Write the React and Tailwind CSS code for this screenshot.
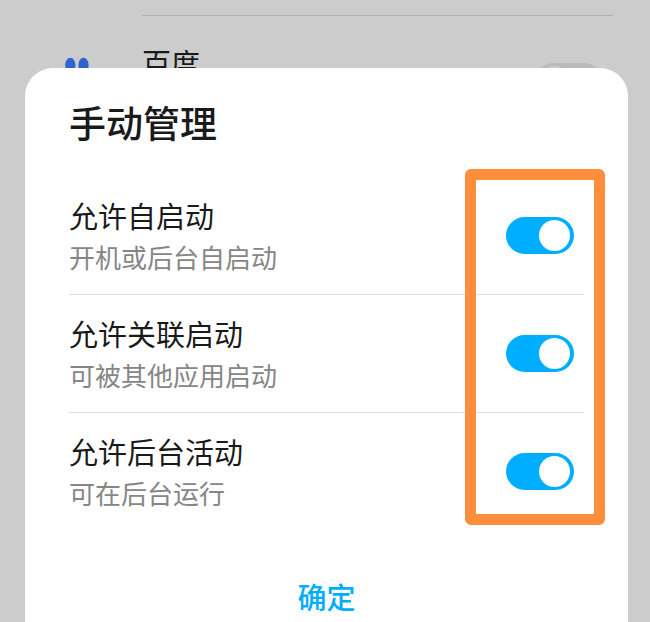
import { useState } from "react";

const items = [
  { id: "autoStart", title: "允许自启动", desc: "开机或后台自启动" },
  { id: "linkedStart", title: "允许关联启动", desc: "可被其他应用启动" },
  { id: "background", title: "允许后台活动", desc: "可在后台运行" },
];

function Switch({ id, checked, onChange }) {
  return (
    <input
      id={id}
      type="checkbox"
      role="switch"
      checked={checked}
      onChange={onChange}
      className="mr-[10px] flex h-[37px] w-[68px] shrink-0 cursor-pointer appearance-none items-center rounded-full bg-[#bababa] px-1 before:h-[31px] before:w-[31px] before:rounded-full before:bg-[#cccccc] checked:justify-end checked:bg-[#00aeff] checked:before:bg-white"
    />
  );
}

function BaiduLogo() {
  return (
    <svg viewBox="0 0 48 52" className="mt-[41px] h-[52px] w-12 shrink-0" fill="#3163cf" aria-hidden="true">
      <ellipse cx="17.3" cy="9" rx="5.2" ry="7.2" />
      <ellipse cx="30.5" cy="9" rx="5.2" ry="7.2" />
      <ellipse cx="6" cy="23" rx="5" ry="7" />
      <ellipse cx="42" cy="23" rx="5" ry="7" />
      <path d="M24 20c-6 0-8 6-12 10s-7 7-5 13c2 7 10 5 17 5s15 2 17-5c2-6-1-9-5-13s-6-10-12-10z" />
    </svg>
  );
}

export default function App() {
  const [baidu, setBaidu] = useState(false);
  const [settings, setSettings] = useState({
    autoStart: true,
    linkedStart: true,
    background: true,
  });

  const toggle = (id) => {
    setSettings((prev) => ({ ...prev, [id]: !prev[id] }));
  };

  return (
    <div className="min-h-screen bg-[#cccccc] font-['Noto_Sans_CJK_SC',sans-serif] text-[#1a1a1a]">
      <main className="flex pt-[15px] pr-[37px] pl-[53px]">
        <BaiduLogo />
        <div className="ml-[41px] flex flex-1 items-start justify-between border-t border-[#b0b0b0]">
          <label htmlFor="baidu" className="mt-[26px] text-[29px] leading-10">百度</label>
          <div className="mt-[47px]">
            <Switch id="baidu" checked={baidu} onChange={() => setBaidu(!baidu)} />
          </div>
        </div>
      </main>

      <div className="fixed inset-0 flex flex-col pt-[68px] pr-[22px] pl-[25px]">
        <section role="dialog" aria-labelledby="dialog-title" className="flex-1 rounded-t-[28px] bg-white px-11 pt-[30px]">
          <h2 id="dialog-title" className="mb-[30px] text-[37px] leading-[49px] font-medium">手动管理</h2>

          <div className="relative">
            <ul className="divide-y divide-[#dedede]">
              {items.map((item) => (
                <li key={item.id} className="flex items-center justify-between py-4">
                  <label htmlFor={item.id} className="pt-0.5">
                    <span className="block text-[29px] leading-[41px]">{item.title}</span>
                    <span className="block text-[26px] leading-[42px] text-[#868686]">{item.desc}</span>
                  </label>
                  <Switch id={item.id} checked={settings[item.id]} onChange={() => toggle(item.id)} />
                </li>
              ))}
            </ul>
            <div className="pointer-events-none absolute -top-2 -right-[21px] bottom-[5px] w-[140px] rounded-md border-[11px] border-[#ff8e3c]" />
          </div>

          <button type="button" className="mx-auto mt-[42px] block text-[29px] leading-[48px] font-medium text-[#00aeff]">
            确定
          </button>
        </section>
      </div>
    </div>
  );
}
